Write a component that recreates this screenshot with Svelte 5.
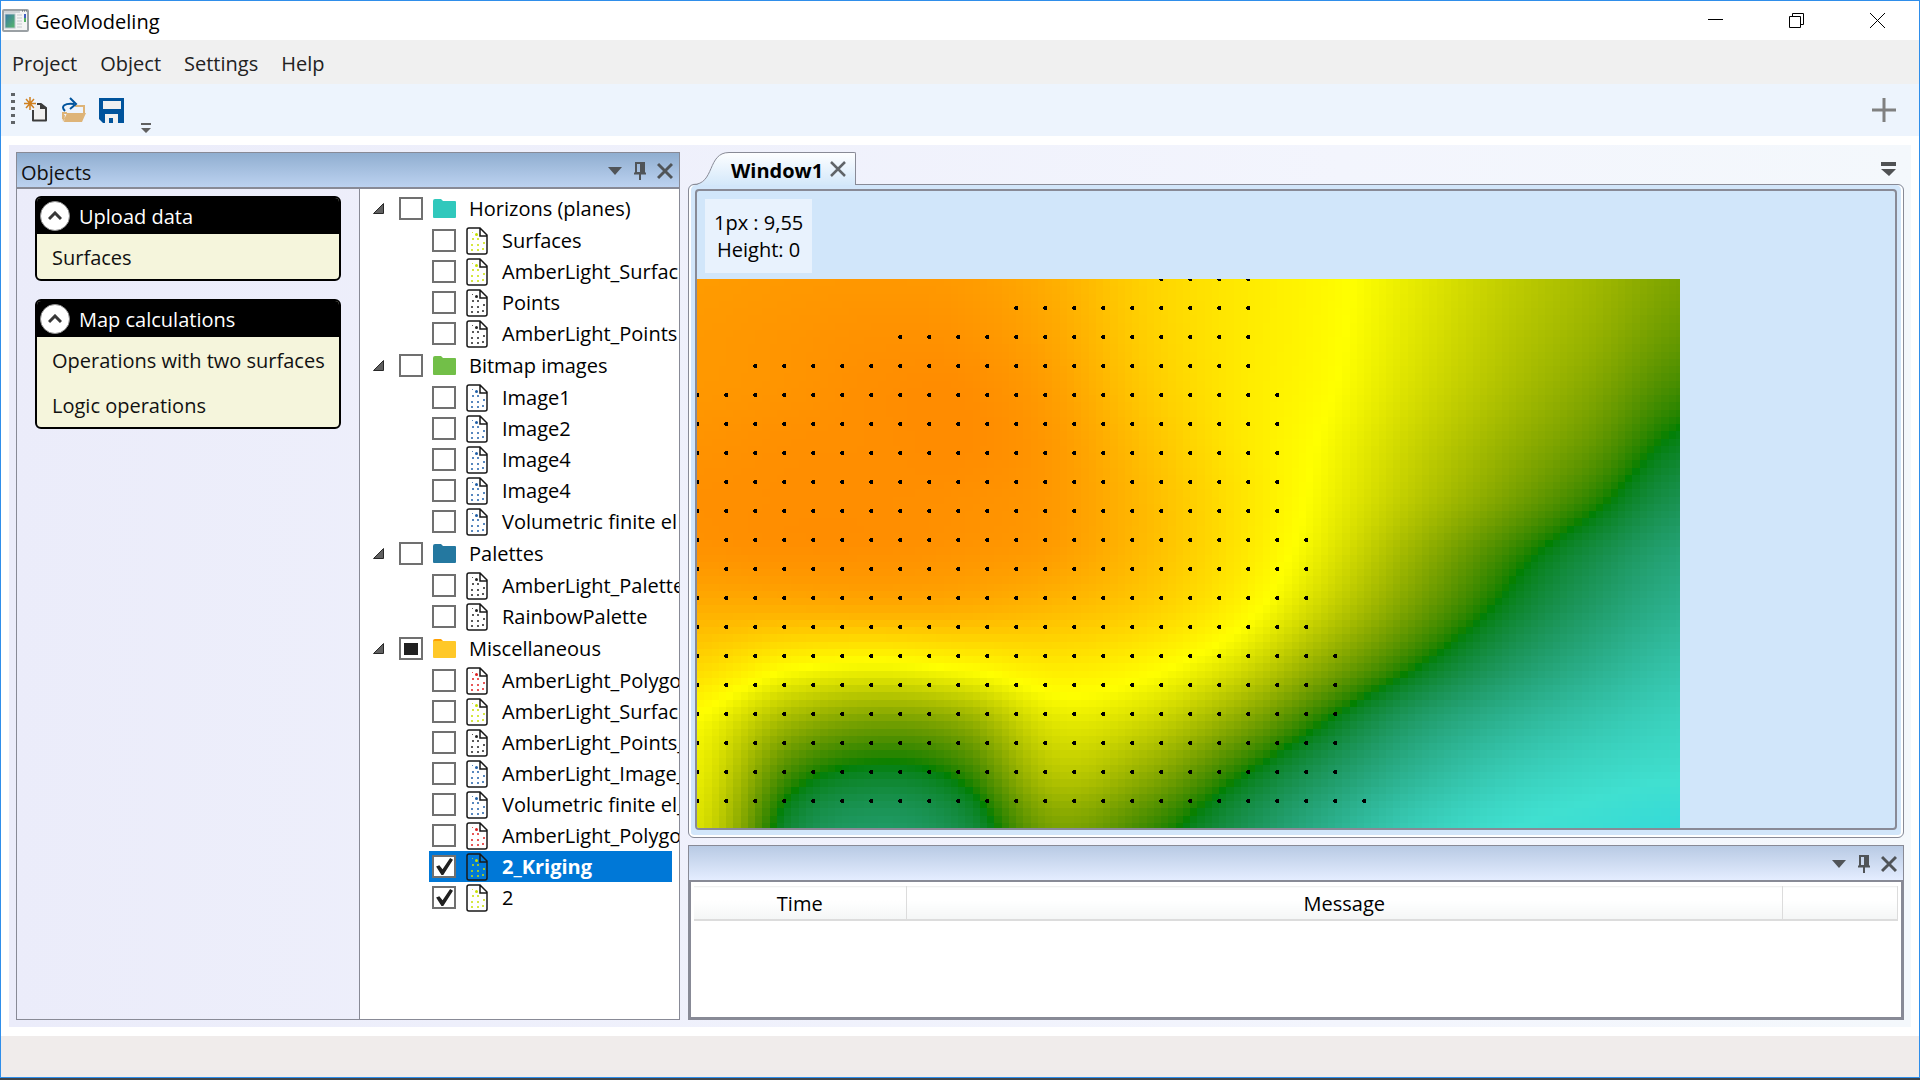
<script lang="ts">
	import { onMount } from 'svelte';

	interface Leaf {
		name: string;
		kind: 'surface' | 'points' | 'image' | 'polygon';
		checked?: boolean;
		selected?: boolean;
	}

	interface Folder {
		name: string;
		color: string;
		tab?: string;
		partial?: boolean;
		items: Leaf[];
	}

	const menus = ['Project', 'Object', 'Settings', 'Help'];

	const groups = [
		{ title: 'Upload data', actions: ['Surfaces'] },
		{ title: 'Map calculations', actions: ['Operations with two surfaces', 'Logic operations'] }
	];

	const dotColors = {
		surface: '#c8e000',
		points: '#222222',
		image: '#1f5fa8',
		polygon: '#e02020'
	};

	const dots = [
		[6, 5, 1], [9, 6, 3], [6, 11, 2], [11, 11, 2], [17, 15, 2], [11, 17, 2],
		[5, 17, 2], [16, 21, 2], [5, 22, 2], [11, 22, 2]
	];

	const tree: Folder[] = [
		{
			name: 'Horizons (planes)',
			color: '#30c8bc',
			items: [
				{ name: 'Surfaces', kind: 'surface' },
				{ name: 'AmberLight_Surfaces', kind: 'surface' },
				{ name: 'Points', kind: 'points' },
				{ name: 'AmberLight_Points', kind: 'points' }
			]
		},
		{
			name: 'Bitmap images',
			color: '#72bf48',
			items: [
				{ name: 'Image1', kind: 'image' },
				{ name: 'Image2', kind: 'image' },
				{ name: 'Image4', kind: 'image' },
				{ name: 'Image4', kind: 'image' },
				{ name: 'Volumetric finite el', kind: 'image' }
			]
		},
		{
			name: 'Palettes',
			color: '#2478a0',
			items: [
				{ name: 'AmberLight_Palette', kind: 'points' },
				{ name: 'RainbowPalette', kind: 'points' }
			]
		},
		{
			name: 'Miscellaneous',
			color: '#ffc828',
			tab: '#ffa000',
			partial: true,
			items: [
				{ name: 'AmberLight_Polygons', kind: 'polygon' },
				{ name: 'AmberLight_Surfaces', kind: 'surface' },
				{ name: 'AmberLight_Points_2', kind: 'points' },
				{ name: 'AmberLight_Image_2', kind: 'image' },
				{ name: 'Volumetric finite el_2', kind: 'image' },
				{ name: 'AmberLight_Polygons', kind: 'polygon' },
				{ name: '2_Kriging', kind: 'surface', checked: true, selected: true },
				{ name: '2', kind: 'surface', checked: true }
			]
		}
	];

	// Surface heights on a coarse grid, one row per line
	const heights = [
		[2.87, 2.89, 2.9, 2.87, 2.7, 2.4, 2.2, 2.06, 1.86, 1.66, 1.5, 1.33],
		[2.89, 2.92, 2.95, 2.93, 2.76, 2.42, 2.2, 2.05, 1.83, 1.62, 1.45, 1.25],
		[2.9, 2.93, 2.98, 2.99, 2.83, 2.47, 2.2, 2.03, 1.78, 1.56, 1.36, 1.12],
		[2.94, 2.97, 2.98, 3.0, 2.88, 2.55, 2.22, 1.98, 1.7, 1.46, 1.24, 0.95],
		[2.97, 2.98, 2.98, 2.96, 2.88, 2.6, 2.26, 1.94, 1.62, 1.34, 1.07, 0.77],
		[2.93, 2.96, 2.96, 2.92, 2.84, 2.58, 2.24, 1.86, 1.46, 1.12, 0.83, 0.58],
		[2.7, 2.7, 2.72, 2.7, 2.6, 2.43, 2.12, 1.7, 1.3, 0.96, 0.67, 0.44],
		[2.35, 2.08, 1.99, 2.08, 2.2, 2.09, 1.82, 1.4, 1.04, 0.73, 0.48, 0.28],
		[1.99, 1.52, 1.34, 1.44, 1.85, 1.75, 1.42, 1.03, 0.68, 0.44, 0.26, 0.13],
		[1.88, 1.14, 0.94, 1.07, 1.6, 1.42, 1.05, 0.72, 0.42, 0.2, 0.08, 0.02],
		[1.8, 0.9, 0.68, 0.83, 1.32, 1.12, 0.8, 0.48, 0.19, 0.02, -0.06, -0.16]
	];

	// Turquoise - green - yellow - orange, with deep sky blue below zero
	const palette = [
		[0, 191, 255],
		[64, 224, 208],
		[0, 128, 0],
		[255, 255, 0],
		[255, 140, 0]
	];

	// First and last sample index of every row of measured points
	const samples = [
		[16, 19], [11, 19], [7, 19], [2, 19], [0, 20], [0, 20], [0, 20], [0, 20], [0, 20],
		[0, 21], [0, 21], [0, 21], [0, 21], [0, 22], [0, 22], [0, 22], [0, 22], [0, 22], [0, 23]
	];

	const mapWidth = 983;
	const mapHeight = 549;
	const step = 29;
	const cell = step / 4;

	let canvas: HTMLCanvasElement;

	function cubic(p: number[], t: number) {
		return (
			p[1] +
			0.5 * t * (p[2] - p[0] + t * (2 * p[0] - 5 * p[1] + 4 * p[2] - p[3] + t * (3 * (p[1] - p[2]) + p[3] - p[0])))
		);
	}

	function around(list: any[], i: number) {
		return [-1, 0, 1, 2].map((d) => list[Math.min(list.length - 1, Math.max(0, i + d))]);
	}

	function heightAt(u: number, v: number) {
		const x = u * (heights[0].length - 1);
		const y = v * (heights.length - 1);
		const col = Math.floor(x);
		const row = Math.floor(y);
		const rows = around(heights, row).map((r) => cubic(around(r, col), x - col));
		return cubic(rows, y - row);
	}

	function colorOf(height: number) {
		const h = Math.min(3.999, Math.max(0, height + 1));
		const i = Math.floor(h);
		let from = palette[i];
		let to = palette[i + 1];
		let t = h - i;
		if (i === 1) {
			[from, to] = [to, from];
			t = 1 - t;
		}
		// red and blue rise fast out of green, the green channel follows later
		const curved = i === 1 || i === 2;
		const rgb = from.map((c, k) => {
			const power = !curved ? 1 : k === 1 ? 1.15 : 0.65;
			return Math.round(c + (to[k] - c) * Math.pow(t, power));
		});
		return `rgb(${rgb.join(',')})`;
	}

	onMount(() => {
		const ctx = canvas.getContext('2d');
		if (!ctx) return;

		for (let y = 0; y * cell < mapHeight; y++) {
			for (let x = 0; x * cell < mapWidth; x++) {
				const u = Math.min(1, ((x + 0.5) * cell) / mapWidth);
				const v = Math.min(1, ((y + 0.5) * cell) / mapHeight);
				ctx.fillStyle = colorOf(heightAt(u, v));
				ctx.fillRect(Math.round(x * cell), Math.round(y * cell), 8, 8);
			}
		}

		ctx.fillStyle = '#000';
		samples.forEach(([from, to], row) => {
			for (let i = from; i <= to; i++) {
				ctx.fillRect(i * step - 1, row * step - 2, 3, 4);
				ctx.fillRect(i * step - 2, row * step - 1, 4, 2);
			}
		});
	});
</script>

{#snippet paneButtons()}
	<button class="icon" aria-label="Window position">
		<svg width="16" height="18" viewBox="0 0 16 18"><path d="M1 5h14L8 13z" fill="#505458" /></svg>
	</button>
	<button class="icon" aria-label="Auto hide">
		<svg width="14" height="18" viewBox="0 0 14 18">
			<path d="M3 1h8v10H3zM1 11.500h12M7 12v6" fill="none" stroke="#505458" stroke-width="2" />
			<path d="M7 1h4v10H7z" fill="#505458" />
		</svg>
	</button>
	<button class="icon" aria-label="Close">
		<svg width="16" height="18" viewBox="0 0 16 18">
			<path d="M1 2l14 14M15 2L1 16" stroke="#505458" stroke-width="3" />
		</svg>
	</button>
{/snippet}

<div class="app">
	<div class="window">
		<header class="title-bar">
			<svg class="logo" width="27" height="23" viewBox="0 0 27 23">
				<defs>
					<linearGradient id="logo-fill" x1="0" y1="0" x2="1" y2="1">
						<stop offset="0" stop-color="#3878a8" />
						<stop offset="1" stop-color="#58b868" />
					</linearGradient>
				</defs>
				<rect x="1" y="1" width="25" height="21" rx="1" fill="#f4f4f4" stroke="#9aa0a4" stroke-width="2" />
				<path d="M2 3h16" stroke="#d0d4d8" stroke-width="2" />
				<path d="M20 2h1M22 2h1M24 2h1" stroke="#505860" stroke-width="1" />
				<rect x="3" y="5" width="10" height="14" fill="url(#logo-fill)" stroke="#b8c4cc" />
				<path d="M15 6h5M15 9h5M15 12h5M15 15h5M15 18h5" stroke="#c4c8cc" />
				<path d="M23 5v4" stroke="#4060c0" stroke-width="2" />
				<path d="M23 9v4" stroke="#50b060" stroke-width="2" />
			</svg>
			<h1>GeoModeling</h1>
			<div class="window-buttons">
				<button aria-label="Minimize">
					<svg width="15" height="15" viewBox="0 0 15 15"><path d="M0 6.500h15" stroke="#000" /></svg>
				</button>
				<button aria-label="Restore">
					<svg width="15" height="15" viewBox="0 0 15 15">
						<path d="M.5 3.500h11v11H.5zM3.500 3V.5h11v11H12" fill="none" stroke="#000" />
					</svg>
				</button>
				<button aria-label="Close window">
					<svg width="15" height="15" viewBox="0 0 15 15"><path d="M0 0l15 15M15 0L0 15" stroke="#000" /></svg>
				</button>
			</div>
		</header>

		<nav class="menu-bar">
			{#each menus as menu}
				<button>{menu}</button>
			{/each}
		</nav>

		<div class="toolbar">
			<span class="grip"></span>
			<div class="tools">
				<button class="icon" aria-label="New project">
					<svg width="26" height="26" viewBox="0 0 26 26">
						<path d="M7 0v13M1 6.500h12M3 2l8 9M11 2l-8 9" stroke="#d08020" stroke-width="1.500" />
						<path d="M10 13v10.500h13V11l-5-4h-4" fill="#f0f0f0" stroke="#3c3c3c" stroke-width="2" stroke-linejoin="round" />
						<path d="M17 6v6h7v-1z" fill="#3c3c3c" />
					</svg>
				</button>
				<button class="icon" aria-label="Open project">
					<svg width="26" height="26" viewBox="0 0 26 26">
						<path d="M2 22v-6h4M14 9h9v8" fill="none" stroke="#deb478" stroke-width="2" />
						<path d="M2 25l4-9h19l-4 9zM1 17l1 8h1l1-7z" fill="#deb478" />
						<path d="M4 14C-1 9 4 6 13 7M9 1l6 6-6 5" fill="none" stroke="#00539c" stroke-width="2" />
					</svg>
				</button>
				<button class="icon" aria-label="Save project">
					<svg width="26" height="26" viewBox="0 0 26 26">
						<path d="M0 1h25v25H4l-4-4z" fill="#00539c" />
						<path d="M4 4h18v8H4zM6 17h13v9h-5v-5h-4v5H6z" fill="#f0f0f0" />
					</svg>
				</button>
				<button class="icon overflow" aria-label="Toolbar options">
					<svg width="10" height="12" viewBox="0 0 10 12"><path d="M0 1h10v2H0zM0 6h10l-5 5z" fill="#606060" /></svg>
				</button>
			</div>
			<button class="icon add" aria-label="Add window">
				<svg width="24" height="24" viewBox="0 0 24 24"><path d="M12 0v24M0 12h24" stroke="#808080" stroke-width="3" /></svg>
			</button>
		</div>

		<main class="dock">
			<section class="pane objects">
				<div class="pane-header active">
					<h2>Objects</h2>
					{@render paneButtons()}
				</div>
				<div class="objects-body">
					<div class="tasks">
						{#each groups as group}
							<div class="group">
								<button class="group-header">
									<span class="chevron">
										<svg width="14" height="10" viewBox="0 0 14 10">
											<path d="M1 8l6-6 6 6" fill="none" stroke="#383838" stroke-width="3" />
										</svg>
									</span>
									{group.title}
								</button>
								{#each group.actions as action}
									<button class="action">{action}</button>
								{/each}
							</div>
						{/each}
					</div>
					<ul class="tree">
						{#each tree as folder}
							<li>
								<label class="row folder">
									<svg width="11" height="11" viewBox="0 0 11 11">
										<path d="M10.500 .5v10H.5z" fill="#606060" stroke="#282828" />
									</svg>
									<input type="checkbox" indeterminate={folder.partial ?? false} />
									<svg width="23" height="19" viewBox="0 0 23 19">
										<path d="M0 2q0-2 2-2h6l2 2h11v8H0z" fill={folder.tab ?? folder.color} />
										<rect y="2" width="23" height="17" rx="1" fill={folder.color} />
									</svg>
									<span>{folder.name}</span>
								</label>
								<ul>
									{#each folder.items as item}
										<li>
											<label class="row leaf" class:selected={item.selected}>
												<input type="checkbox" checked={item.checked} />
												<svg width="22" height="28" viewBox="0 0 22 28">
													<path
														d="M3 1h11l7 7v17q0 2-2 2H3q-2 0-2-2V3q0-2 2-2zM14 1v8h7"
														fill={item.selected ? 'none' : '#fff'}
														stroke="#181818"
														stroke-width="1.500"
													/>
													{#each dots as [x, y, size]}
														<circle cx={x + size / 2} cy={y + size / 2} r={size / 2} fill={dotColors[item.kind]} />
													{/each}
												</svg>
												<span>{item.name}</span>
											</label>
										</li>
									{/each}
								</ul>
							</li>
						{/each}
					</ul>
				</div>
			</section>

			<div class="workspace">
				<section class="document">
					<div class="tabs">
						<div class="tab">
							<svg class="slope" width="36" height="33" viewBox="0 0 36 33">
								<defs>
									<linearGradient id="tab-fill" x1="0" y1="0" x2="0" y2="1">
										<stop offset="0" stop-color="#fdfeff" />
										<stop offset="1" stop-color="#d4e8fa" />
									</linearGradient>
								</defs>
								<path d="M0 33C22 33 14 .5 36 .5V33z" fill="url(#tab-fill)" />
								<path d="M0 32.500C22 32.500 14 .5 36 .5" fill="none" stroke="#888a96" />
							</svg>
							<div class="tab-body">
								<button class="tab-name">Window1</button>
								<button class="icon" aria-label="Close tab">
									<svg width="16" height="16" viewBox="0 0 16 16">
										<path d="M1 1l14 14M15 1L1 15" stroke="#606468" stroke-width="2.500" />
									</svg>
								</button>
							</div>
						</div>
						<button class="icon" aria-label="Open windows">
							<svg width="15" height="15" viewBox="0 0 15 15"><path d="M0 1h15v4H0zM0 8h15l-7 7z" fill="#505254" /></svg>
						</button>
					</div>
					<div class="frame">
						<div class="viewport">
							<div class="readout">
								<div>1px : 9,55</div>
								<div>Height: 0</div>
							</div>
							<canvas bind:this={canvas} width={mapWidth} height={mapHeight}></canvas>
						</div>
					</div>
				</section>

				<section class="pane log">
					<div class="pane-header">
						{@render paneButtons()}
					</div>
					<div class="log-body">
						<table>
							<thead>
								<tr>
									<th class="time">Time</th>
									<th>Message</th>
									<th class="rest"></th>
								</tr>
							</thead>
						</table>
					</div>
				</section>
			</div>
		</main>

		<footer class="status-bar"></footer>
	</div>
	<div class="taskbar"></div>
</div>

<style>
	:global(body) {
		margin: 0;
	}

	.app {
		--line: #888a96;
		display: flex;
		flex-direction: column;
		height: 100vh;
		font-family: 'Open Sans', 'Noto Sans', sans-serif;
		font-size: 20px;
		line-height: 27px;
		color: #111;
		background: #fff;
	}

	.app *,
	.app *::before {
		box-sizing: border-box;
	}

	button {
		margin: 0;
		padding: 0;
		border: none;
		background: none;
		color: inherit;
		font: inherit;
	}

	svg {
		display: block;
		flex: none;
	}

	h1,
	h2 {
		margin: 0;
		font-size: 20px;
		font-weight: normal;
	}

	ul {
		margin: 0;
		padding: 0;
		list-style: none;
	}

	.window {
		flex: 1;
		min-height: 0;
		display: flex;
		flex-direction: column;
		border: 1px solid #2f8eea;
	}

	.taskbar {
		height: 2px;
		background: #404448;
	}

	.title-bar {
		display: flex;
		align-items: center;
		gap: 6px;
		height: 39px;
		padding: 0 1px;
	}

	.title-bar h1 {
		padding-top: 2px;
		color: #000;
	}

	.window-buttons {
		display: flex;
		margin-left: auto;
	}

	.window-buttons button {
		display: flex;
		justify-content: center;
		width: 81px;
	}

	.menu-bar {
		display: flex;
		height: 44px;
		background: #f0f0f0;
	}

	.menu-bar button {
		padding: 2px 12px 0 11px;
		color: #222;
	}

	.toolbar {
		display: flex;
		align-items: center;
		gap: 8px;
		height: 52px;
		padding: 0 23px 0 10px;
		background: #edf4fd;
	}

	.tools {
		display: flex;
		align-items: center;
		align-self: stretch;
		gap: 12px;
	}

	.grip {
		width: 4px;
		height: 35px;
		background: repeating-linear-gradient(#606468 0 3px, transparent 3px 7px);
	}

	.overflow {
		align-self: flex-end;
		padding: 0 0 2px 4px;
	}

	.add {
		margin-left: auto;
	}

	.dock {
		flex: 1;
		min-height: 0;
		display: flex;
		gap: 8px;
		margin: 9px 8px;
		padding: 7px;
		background: linear-gradient(90deg, #ebecfa, #f3f5fd 70%, #f4f8fc);
	}

	.pane {
		display: flex;
		flex-direction: column;
		border: 1px solid var(--line);
	}

	.objects {
		flex: none;
		width: 664px;
	}

	.pane-header {
		display: flex;
		align-items: center;
		justify-content: flex-end;
		gap: 10px;
		height: 36px;
		padding: 2px 6px 0 4px;
		border-bottom: 2px solid var(--line);
		background: linear-gradient(#b8cae4, #e4edff);
	}

	.pane-header.active {
		background: linear-gradient(#90aed0, #bcd2f0);
	}

	.pane-header h2 {
		margin-right: auto;
		padding-top: 2px;
	}

	.objects-body {
		flex: 1;
		min-height: 0;
		display: flex;
	}

	.tasks {
		flex: none;
		width: 342px;
		padding: 7px 18px 0;
	}

	.group {
		margin-bottom: 18px;
		border: 2px solid #000;
		border-radius: 6px;
		overflow: hidden;
		background: #f5f5dc;
	}

	.group-header {
		display: flex;
		align-items: center;
		gap: 9px;
		width: 100%;
		height: 36px;
		padding: 0 3px;
		background: #000;
		color: #fff;
	}

	.chevron {
		display: flex;
		align-items: center;
		justify-content: center;
		width: 30px;
		height: 30px;
		border: 1px solid #909090;
		border-radius: 50%;
		background: #fff;
	}

	.action {
		display: block;
		width: 100%;
		height: 45px;
		padding: 2px 15px 0;
		text-align: left;
		white-space: nowrap;
	}

	.tree {
		flex: 1;
		min-width: 0;
		overflow: hidden;
		padding-top: 3px;
		border-left: 1px solid var(--line);
		background: #fff;
		color: #000;
	}

	.row {
		display: flex;
		align-items: center;
		white-space: nowrap;
	}

	.folder {
		gap: 10px;
		height: 33px;
		padding-left: 13px;
	}

	.folder input {
		margin-left: 5px;
	}

	.folder span {
		margin-left: 3px;
	}

	.leaf {
		gap: 10px;
		height: 31px;
		margin: 0 7px 0 69px;
		padding-left: 3px;
	}

	.leaf span {
		margin-left: 4px;
	}

	.selected {
		background: #0078d7;
		color: #fff;
		font-weight: bold;
	}

	input[type='checkbox'] {
		appearance: none;
		flex: none;
		display: grid;
		place-items: center;
		width: 24px;
		height: 23px;
		margin: 0;
		border: 2px solid #707070;
		background: #fff;
	}

	.folder input[type='checkbox'] {
		margin-left: 5px;
	}

	input:checked::before {
		content: '';
		width: 18px;
		height: 17px;
		background: #202020;
		clip-path: polygon(6% 50%, 24% 42%, 42% 66%, 84% 0, 100% 10%, 46% 100%, 36% 100%);
	}

	input:indeterminate::before {
		content: '';
		width: 14px;
		height: 12px;
		background: #202020;
	}

	.workspace {
		flex: 1;
		min-width: 0;
		display: flex;
		flex-direction: column;
		gap: 7px;
	}

	.document {
		flex: 1;
		min-height: 0;
		display: flex;
		flex-direction: column;
	}

	.tabs {
		display: flex;
		align-items: center;
		justify-content: space-between;
		padding: 0 8px 0 5px;
	}

	.tab {
		position: relative;
		display: flex;
		height: 33px;
		margin-bottom: -1px;
	}

	.tab-body {
		display: flex;
		align-items: center;
		gap: 7px;
		padding: 0 9px 0 2px;
		border-top: 1px solid var(--line);
		border-right: 1px solid var(--line);
		border-radius: 0 2px 0 0;
		background: linear-gradient(#fdfeff, #d4e8fa);
	}

	.tab-name {
		padding-top: 3px;
		color: #000;
		font-weight: bold;
	}

	.frame {
		flex: 1;
		min-height: 0;
		display: flex;
		padding: 4px 6px 7px;
		border: 1px solid var(--line);
		border-radius: 6px;
		background: #d2e6fa;
		box-shadow: inset 0 -2px 0 #fff, inset 2px 0 0 #fff, inset -2px 0 0 #fff;
	}

	.viewport {
		flex: 1;
		min-width: 0;
		overflow: hidden;
		border: 2px solid var(--line);
		border-radius: 4px;
		background: #d1e6fa;
	}

	.readout {
		width: max-content;
		margin: 8px 8px 6px;
		padding: 10px 9px;
		background: #e8f2fd;
		text-align: center;
		color: #000;
	}

	canvas {
		display: block;
	}

	.log {
		flex: none;
		height: 175px;
	}

	.log-body {
		flex: 1;
		padding: 4px 3px;
		border: solid var(--line);
		border-width: 0 2px 2px;
		background: #fff;
	}

	table {
		width: 100%;
		border-collapse: collapse;
		table-layout: fixed;
	}

	th {
		height: 33px;
		padding: 2px 0 0;
		border-top: 1px solid #f0f0f0;
		border-bottom: 2px solid #dcdcdc;
		border-right: 1px solid #dcdcdc;
		background: linear-gradient(#fff 40%, #f4f6f6);
		color: #000;
		font-weight: normal;
	}

	.time {
		width: 212px;
	}

	.rest {
		width: 115px;
	}

	.status-bar {
		height: 41px;
		background: #f0eceb;
	}
</style>
